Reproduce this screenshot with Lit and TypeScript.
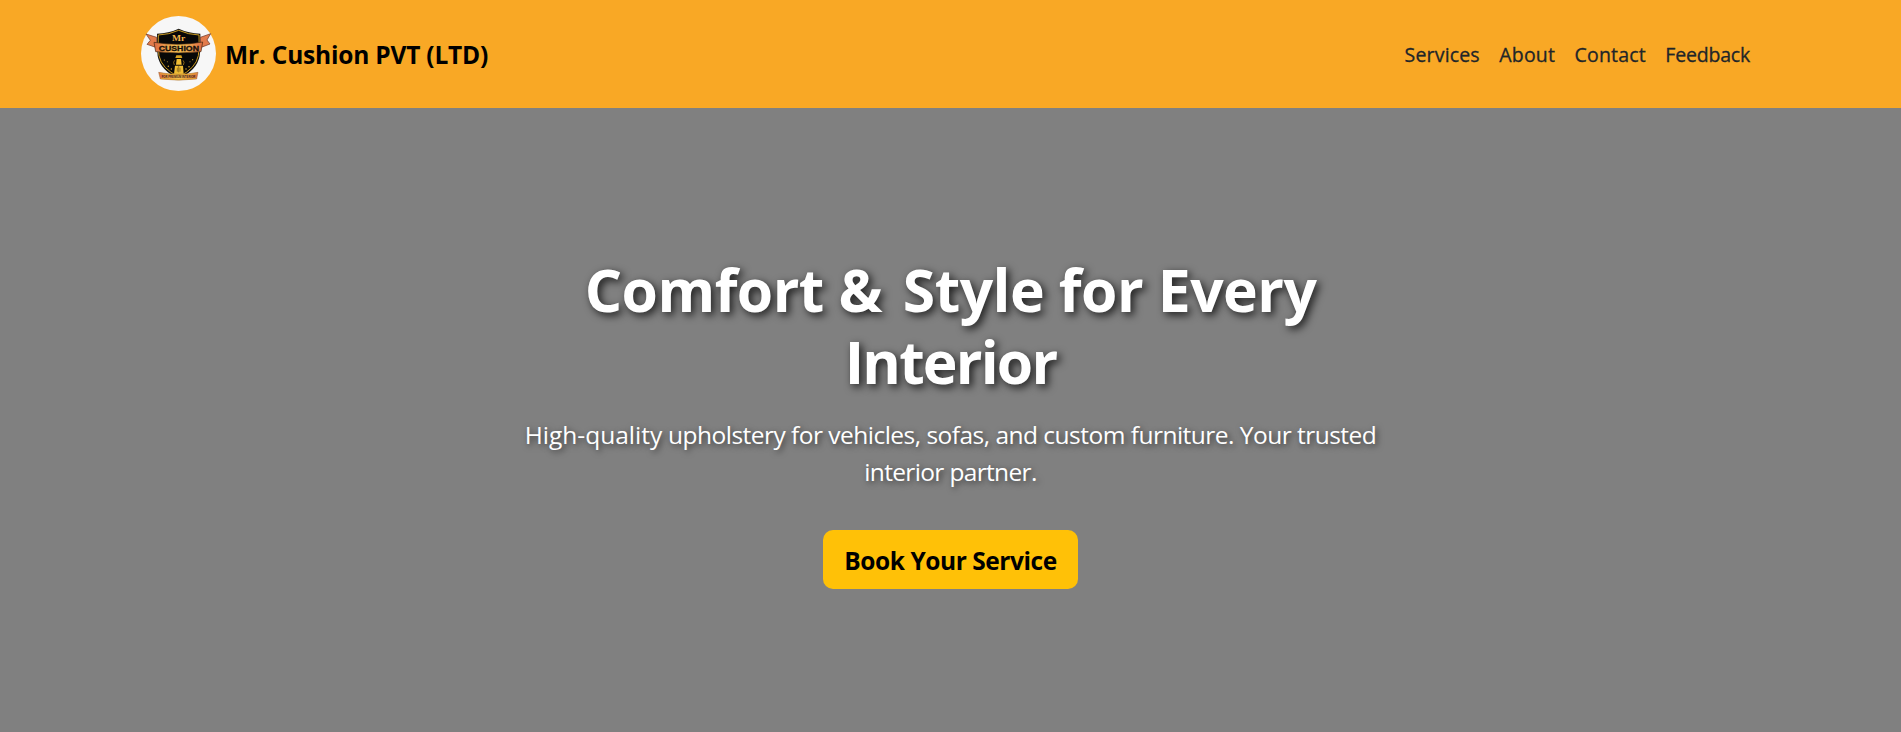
import { LitElement, html, css } from "lit";

const LINKS = [
  { label: "Services", cls: "" },
  { label: "About", cls: "" },
  { label: "Contact", cls: "" },
  { label: "Feedback", cls: "tight" },
];

class BrandLogo extends LitElement {
  static styles = css`
    :host { display: block; width: 75px; height: 75px; flex: none; }
    svg { display: block; width: 100%; height: 100%; }
    .mr { font: 700 25px "Liberation Serif", serif; fill: #f3b64a; }
    .name { font: 700 24px "Liberation Sans", sans-serif; fill: #17100a; stroke: #17100a; stroke-width: 1; }
    .tag { font: 700 8px "Liberation Sans", sans-serif; fill: #3a1c12; }
  `;
  render() {
    return html`
      <svg viewBox="33 33 225 225" role="img" aria-label="Mr. Cushion">
        <defs>
          <linearGradient id="ribbon" x1="0" x2="1" y1="0" y2="0">
            <stop offset="0" stop-color="#dd6843" />
            <stop offset="0.25" stop-color="#eda04c" />
            <stop offset="0.5" stop-color="#f6c352" />
            <stop offset="0.75" stop-color="#eda04c" />
            <stop offset="1" stop-color="#dd6843" />
          </linearGradient>
        </defs>
        <circle cx="145.5" cy="145.5" r="112.5" fill="#f7f7f7" />
        <path d="M146 71Q116 85 81 86Q79 120 83 153Q91 196 146 221Q201 196 209 153Q214 120 211 86Q176 85 146 71Z" fill="#111" />
        <path d="M146 76Q117 89 85 90Q83 122 87 152Q95 191 146 215Q197 191 205 152Q209 122 207 90Q175 89 146 76Z" fill="#080808" stroke="#c99a22" stroke-width="3" />
        <path d="M48 87L80 97L80 128L51 118L61 106ZM242 86L211 97L211 128L240 117L231 105Z" fill="#e27b4c" stroke="#633126" stroke-width="2" />
        <path d="M72 112Q146 124 218 111L213 140Q146 148 77 140Z" fill="url(#ribbon)" stroke="#40240f" stroke-width="2" />
        <text class="mr" x="126" y="108" textLength="40" lengthAdjust="spacingAndGlyphs">Mr</text>
        <text class="name" x="86" y="139" textLength="121" lengthAdjust="spacingAndGlyphs">CUSHION</text>
        <path d="M139 151H154L157 159H136Z" fill="#d9a321" />
        <path d="M140 162H153L155 179H138ZM135 182H159L161 207H132Z" fill="#f0bd35" />
        <path d="M134 166Q128 171 133 180M159 166Q165 171 160 180" fill="none" stroke="#c89525" stroke-width="2" />
        <path d="M146 181V202M142 188V200M150 188V200" stroke="#4b3210" stroke-width="1.5" />
        <g fill="#d8a42c">
          <circle cx="103" cy="165" r="1.8" /><circle cx="112" cy="170" r="1.5" />
          <circle cx="115" cy="184" r="2.2" /><circle cx="124" cy="192" r="2.2" />
          <circle cx="188" cy="164" r="1.8" /><circle cx="180" cy="170" r="1.5" />
          <circle cx="177" cy="185" r="2.2" /><circle cx="168" cy="192" r="2.2" />
        </g>
        <path d="M86 202Q146 214 204 202L200 222Q146 229 91 222Z" fill="url(#ribbon)" stroke="#9b6533" stroke-width="1.5" />
        <path d="M89 206Q146 215 201 206M93 220Q146 227 198 220" fill="none" stroke="#e0a52c" stroke-width="2.5" />
        <text class="tag" x="95" y="219" textLength="101" lengthAdjust="spacingAndGlyphs">FOR PREMIUM INTERIOR</text>
      </svg>
    `;
  }
}
customElements.define("brand-logo", BrandLogo);

class AppRoot extends LitElement {
  static styles = css`
    :host {
      display: flex;
      flex-direction: column;
      height: 100vh;
      font-family: "Open Sans", "Noto Sans", sans-serif;
      overflow: hidden;
    }
    header {
      display: flex;
      align-items: center;
      justify-content: space-between;
      box-sizing: border-box;
      height: 108px;
      flex: none;
      padding: 0 151px 1px 141px;
      background: #f9a825;
    }
    .brand {
      display: flex;
      align-items: center;
      gap: 9px;
      color: #000;
      text-decoration: none;
    }
    .brand-name {
      padding-top: 2px;
      font-size: 24.5px;
      font-weight: 700;
      line-height: 37px;
      letter-spacing: -0.2px;
      white-space: nowrap;
    }
    nav { display: flex; gap: 19.5px; padding-top: 3px; }
    .link {
      color: #212529;
      text-decoration: none;
      font-size: 19.5px;
      font-weight: 500;
      line-height: 30px;
      letter-spacing: 0.17px;
      -webkit-text-stroke: 0.3px #212529;
    }
    .link.tight { letter-spacing: -0.2px; }
    main {
      display: flex;
      flex-direction: column;
      align-items: center;
      flex: 1;
      padding-top: 145px;
      background: #808080;
      color: #fff;
      text-align: center;
    }
    h1, p { margin: 0; white-space: nowrap; }
    h1 {
      font-size: 58.8px;
      font-weight: 700;
      line-height: 72px;
      text-shadow: 3px 3px 8px rgba(0, 0, 0, 0.8);
    }
    .line { display: block; }
    .title-a { letter-spacing: -0.55px; }
    .amp { margin-right: 6px; }
    .title-b { letter-spacing: -1.8px; }
    p {
      margin-top: 19px;
      font-size: 24.5px;
      line-height: 37.2px;
      text-shadow: 2px 2px 6px rgba(0, 0, 0, 0.6);
    }
    .text-a { letter-spacing: -0.52px; }
    .lead { letter-spacing: 0; }
    .text-b { letter-spacing: -0.66px; }
    .cta {
      box-sizing: border-box;
      width: 255px;
      height: 59px;
      margin-top: 40px;
      padding: 12px 0 10px;
      border-radius: 10px;
      background: #ffc107;
      color: #000;
      font-size: 24.5px;
      font-weight: 700;
      line-height: 37px;
      letter-spacing: -0.45px;
      text-decoration: none;
      white-space: nowrap;
    }
  `;
  render() {
    return html`
      <header>
        <a class="brand"><brand-logo></brand-logo><span class="brand-name">Mr. Cushion PVT (LTD)</span></a>
        <nav>${LINKS.map((l) => html`<a class="link ${l.cls}">${l.label}</a>`)}</nav>
      </header>
      <main>
        <h1><span class="line title-a">Comfort <span class="amp">&amp;</span> Style for Every</span><span class="line title-b">Interior</span></h1>
        <p><span class="line text-a"><span class="lead">High-quality</span> upholstery for vehicles, sofas, and custom furniture. Your trusted</span><span class="line text-b">interior partner.</span></p>
        <a class="cta">Book Your Service</a>
      </main>
    `;
  }
}
customElements.define("app-root", AppRoot);
